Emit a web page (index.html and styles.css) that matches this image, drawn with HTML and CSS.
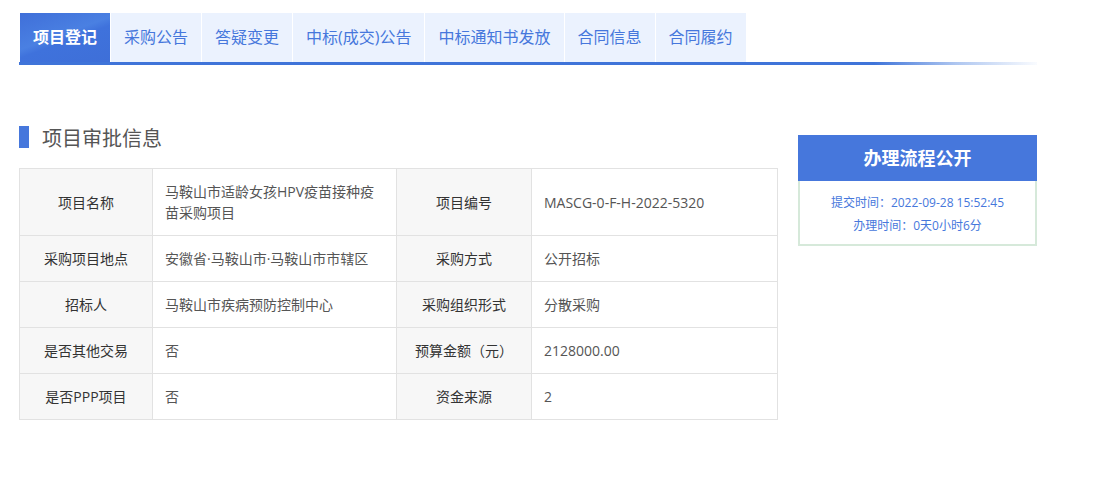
FILE: index.html
```html
<!DOCTYPE html>
<html lang="zh-CN">

<head>
    <meta charset="UTF-8">
    <title>项目登记</title>
    <link rel="stylesheet" href="styles.css">
</head>

<body>
    <div class="page">
        <!-- 顶部标签 -->
        <div class="tabs">
            <div class="tab-list">
                <span class="tab active">项目登记</span>
                <span class="tab">采购公告</span>
                <span class="tab">答疑变更</span>
                <span class="tab">中标(成交)公告</span>
                <span class="tab">中标通知书发放</span>
                <span class="tab">合同信息</span>
                <span class="tab">合同履约</span>
            </div>
            <div class="tab-line"></div>
        </div>

        <div class="content">
            <div class="main">
                <h3 class="section-title"><i></i>项目审批信息</h3>
                <table class="info-table">
                    <colgroup>
                        <col style="width:133px">
                        <col style="width:244px">
                        <col style="width:135px">
                        <col>
                    </colgroup>
                    <tr>
                        <td class="label">项目名称</td>
                        <td>马鞍山市适龄女孩HPV疫苗接种疫苗采购项目</td>
                        <td class="label">项目编号</td>
                        <td>MASCG-0-F-H-2022-5320</td>
                    </tr>
                    <tr>
                        <td class="label">采购项目地点</td>
                        <td>安徽省·马鞍山市·马鞍山市市辖区</td>
                        <td class="label">采购方式</td>
                        <td>公开招标</td>
                    </tr>
                    <tr>
                        <td class="label">招标人</td>
                        <td>马鞍山市疾病预防控制中心</td>
                        <td class="label">采购组织形式</td>
                        <td>分散采购</td>
                    </tr>
                    <tr>
                        <td class="label">是否其他交易</td>
                        <td>否</td>
                        <td class="label">预算金额（元）</td>
                        <td>2128000.00</td>
                    </tr>
                    <tr>
                        <td class="label">是否PPP项目</td>
                        <td>否</td>
                        <td class="label">资金来源</td>
                        <td>2</td>
                    </tr>
                </table>
            </div>

            <!-- 右侧流程 -->
            <div class="side">
                <div class="side-head">办理流程公开</div>
                <div class="side-body">
                    <p>提交时间：2022-09-28 15:52:45</p>
                    <p>办理时间：0天0小时6分</p>
                </div>
            </div>
        </div>
    </div>
</body>

</html>
```

FILE: styles.css
```css
* {
    margin: 0;
    padding: 0;
    box-sizing: border-box;
}

body,
html {
    width: 100%;
    height: 100%;
    background-color: #fff;
    font-family: "Open Sans", "Noto Sans CJK SC", sans-serif;
}

.page {
    padding: 13px 0 0 19px;
}

.tabs {
    width: 1018px;
}

.tabs .tab-list {
    display: flex;
    gap: 1px;
    padding-left: 1px;
}

.tabs .tab {
    display: block;
    height: 49px;
    line-height: 49px;
    padding: 0 13px;
    font-size: 16px;
    color: #4677dc;
    background-color: #ebf2fe;
}

.tabs .tab.active {
    width: 90px;
    text-align: center;
    padding: 0;
    color: #fff;
    font-weight: bold;
    background: linear-gradient(160deg, #3f6fd9 0%, #4a80e2 45%, #3f72dc 55%, #3e6fd8 100%);
}

.tabs .tab-line {
    height: 3px;
    background: linear-gradient(90deg, #3f74d9 0%, #3f74d9 84%, rgba(120, 160, 230, .6) 92%, rgba(235, 242, 254, .3) 100%);
}

.content {
    display: flex;
    align-items: flex-start;
    gap: 20px;
    margin-top: 61px;
}

.main {
    width: 759px;
}

.section-title {
    display: flex;
    align-items: center;
    height: 22px;
    font-size: 20px;
    font-weight: normal;
    color: #555;
}

.section-title i {
    display: block;
    width: 10px;
    height: 22px;
    margin-right: 13px;
    background-color: #4677dc;
}

.info-table {
    width: 759px;
    margin-top: 20px;
    border-collapse: collapse;
    table-layout: fixed;
    font-size: 14px;
    color: #555;
}

.info-table td {
    border: 1px solid #e2e2e2;
    padding: 12px 12px;
    line-height: 21px;
}

.info-table td.label {
    background-color: #f7f7f7;
    color: #333;
    text-align: center;
    padding: 12px 6px;
}

.side {
    width: 239px;
    margin-top: 9px;
}

.side .side-head {
    height: 46px;
    line-height: 46px;
    text-align: center;
    font-size: 18px;
    font-weight: bold;
    color: #fff;
    background-color: #4677dc;
}

.side .side-body {
    border: 2px solid #d6e9da;
    border-top: none;
    padding: 10px 0 7px;
    text-align: center;
    font-size: 12px;
    line-height: 23px;
    color: #4677dc;
}
```
